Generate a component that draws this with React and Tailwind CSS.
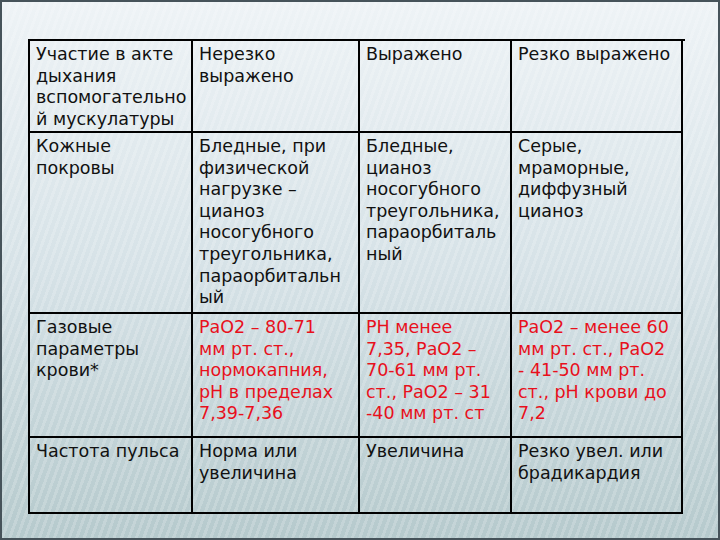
import React from "react";

const rows = [
  {
    h: "h-[92px]",
    red: false,
    cells: [
      ["Участие в акте", "дыхания", "вспомогательно", "й мускулатуры"],
      ["Нерезко", "выражено"],
      ["Выражено"],
      ["Резко выражено"],
    ],
  },
  {
    h: "h-[181px]",
    red: false,
    cells: [
      ["Кожные", "покровы"],
      ["Бледные, при", "физической", "нагрузке –", "цианоз", "носогубного", "треугольника,", "параорбитальн", "ый"],
      ["Бледные,", "цианоз", "носогубного", "треугольника,", "параорбиталь", "ный"],
      ["Серые,", "мраморные,", "диффузный", "цианоз"],
    ],
  },
  {
    h: "h-[124px]",
    red: true,
    cells: [
      ["Газовые", "параметры", "крови*"],
      ["РаО2 – 80-71", "мм рт. ст.,", "нормокапния,", "рН в пределах", "7,39-7,36"],
      ["РН менее", "7,35, РаО2 –", "70-61 мм рт.", "ст., РаО2 – 31", "-40 мм рт. ст"],
      ["РаО2 – менее 60", "мм рт. ст., РаО2", "- 41-50 мм рт.", "ст., рН крови до", "7,2"],
    ],
  },
  {
    h: "h-[76px]",
    red: false,
    cells: [
      ["Частота пульса"],
      ["Норма или", "увеличина"],
      ["Увеличина"],
      ["Резко увел. или", "брадикардия"],
    ],
  },
];

export default function App() {
  return (
    <div className="w-[720px] h-[540px] overflow-hidden border-2 border-[#46535a] bg-gradient-to-b from-[#eef3f6] via-[#d6e2e7] to-[#b6cacd] font-['DejaVu_Sans',sans-serif]">
      <div className="w-full h-full bg-[repeating-linear-gradient(110deg,rgba(255,255,255,0.18)_0px,rgba(255,255,255,0.18)_3px,rgba(255,255,255,0)_3px,rgba(255,255,255,0)_7px)] pt-[37px] pl-[26px]">
        <div className="w-[657px] grid grid-cols-[163px_167px_152px_171px] border-t-2 border-l-2 border-black">
          {rows.map((row, ri) =>
            row.cells.map((lines, ci) => (
              <div
                key={ri + "-" + ci}
                className={`${row.h} border-r-2 border-b-2 border-black pl-[6px] pt-[3px] text-[17.5px] leading-[21.6px] whitespace-nowrap ${
                  row.red && ci > 0 ? "text-[#e8101c]" : "text-[#111]"
                }`}
              >
                {lines.map((l, li) => (
                  <div key={li}>{l}</div>
                ))}
              </div>
            ))
          )}
        </div>
      </div>
    </div>
  );
}
